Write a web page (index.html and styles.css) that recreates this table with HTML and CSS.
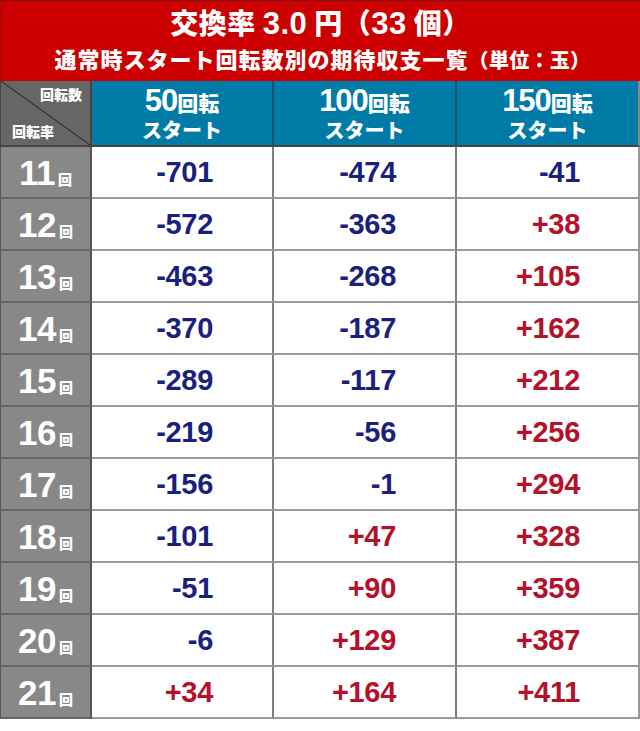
FILE: index.html
```html
<!DOCTYPE html>
<html lang="ja">
<head>
<meta charset="utf-8">
<link rel="stylesheet" href="styles.css">
</head>
<body>
<div class="page">
  <header class="banner">
    <div class="title">交換率 <span class="num">3.0</span> 円（<span class="num">33</span> 個）</div>
    <div class="subtitle">通常時スタート回転数別の期待収支一覧<span class="unit">（単位：玉）</span></div>
  </header>
  <div class="grid">
    <div class="corner"><span class="c-top">回転数</span><span class="c-bottom">回転率</span></div>
    <div class="colhead"><span class="l1"><span class="big">50</span>回転</span><span class="l2">スタート</span></div>
    <div class="colhead"><span class="l1"><span class="big">100</span>回転</span><span class="l2">スタート</span></div>
    <div class="colhead last"><span class="l1"><span class="big">150</span>回転</span><span class="l2">スタート</span></div>

    <div class="rowhead"><span class="big">11</span><span class="kai">回</span></div>
    <div class="val neg">-701</div><div class="val neg">-474</div><div class="val neg last">-41</div>

    <div class="rowhead"><span class="big">12</span><span class="kai">回</span></div>
    <div class="val neg">-572</div><div class="val neg">-363</div><div class="val pos last">+38</div>

    <div class="rowhead"><span class="big">13</span><span class="kai">回</span></div>
    <div class="val neg">-463</div><div class="val neg">-268</div><div class="val pos last">+105</div>

    <div class="rowhead"><span class="big">14</span><span class="kai">回</span></div>
    <div class="val neg">-370</div><div class="val neg">-187</div><div class="val pos last">+162</div>

    <div class="rowhead"><span class="big">15</span><span class="kai">回</span></div>
    <div class="val neg">-289</div><div class="val neg">-117</div><div class="val pos last">+212</div>

    <div class="rowhead"><span class="big">16</span><span class="kai">回</span></div>
    <div class="val neg">-219</div><div class="val neg">-56</div><div class="val pos last">+256</div>

    <div class="rowhead"><span class="big">17</span><span class="kai">回</span></div>
    <div class="val neg">-156</div><div class="val neg">-1</div><div class="val pos last">+294</div>

    <div class="rowhead"><span class="big">18</span><span class="kai">回</span></div>
    <div class="val neg">-101</div><div class="val pos">+47</div><div class="val pos last">+328</div>

    <div class="rowhead"><span class="big">19</span><span class="kai">回</span></div>
    <div class="val neg">-51</div><div class="val pos">+90</div><div class="val pos last">+359</div>

    <div class="rowhead"><span class="big">20</span><span class="kai">回</span></div>
    <div class="val neg">-6</div><div class="val pos">+129</div><div class="val pos last">+387</div>

    <div class="rowhead"><span class="big">21</span><span class="kai">回</span></div>
    <div class="val pos">+34</div><div class="val pos">+164</div><div class="val pos last">+411</div>
  </div>
</div>
</body>
</html>
```

FILE: styles.css
```css
* { box-sizing: border-box; }
html, body { margin: 0; padding: 0; background: #fff; }
body { font-family: "Noto Sans CJK JP", "Liberation Sans", sans-serif; }
.page { width: 640px; }

.banner {
  height: 81px;
  background: #cc0000;
  border-top: 1px solid #7a1414;
  border-left: 1px solid #8a1414;
  color: #fff;
  display: flex;
  flex-direction: column;
  align-items: center;
  padding-top: 2px;
}
.title {
  font-weight: 900;
  font-size: 28px;
  line-height: 38px;
  letter-spacing: 0.5px;
}
.title .num {
  font-family: "Liberation Sans", sans-serif;
  font-weight: 700;
  font-size: 31px;
}
.subtitle {
  font-weight: 900;
  font-size: 22px;
  line-height: 30px;
  letter-spacing: 1px;
  padding-left: 4px;
}
.subtitle .unit { font-size: 20px; letter-spacing: 0.3px; }

.grid {
  display: grid;
  grid-template-columns: 92px 182px 183px 183px;
  grid-template-rows: 66px repeat(11, 52px);
}

.corner {
  background: linear-gradient(to top right, #666 calc(50% - 0.8px), #1e1e1e 50%, #666 calc(50% + 0.8px));
  border-left: 1px solid #444;
  border-right: 2px solid #444;
  border-bottom: 2px solid #444;
  color: #fff;
  font-weight: 900;
  font-size: 14px;
  line-height: 16px;
  display: flex;
  flex-direction: column;
  justify-content: space-between;
  padding: 5px 8px 6px 11px;
}
.c-top { align-self: flex-end; }
.c-bottom { align-self: flex-start; }

.colhead {
  background: #007ba8;
  border-right: 2px solid #1f4f66;
  border-bottom: 2px solid #444;
  color: #fff;
  font-weight: 900;
  display: flex;
  flex-direction: column;
  align-items: center;
  justify-content: center;
  padding-top: 1px;
}
.colhead.last { border-right: 2px solid #888; }
.colhead .l1 { font-size: 21px; line-height: 29px; }
.colhead .big {
  font-family: "Liberation Sans", sans-serif;
  font-weight: 700;
  font-size: 31px;
  letter-spacing: -1px;
}
.colhead .l2 { font-size: 20px; line-height: 25px; }

.rowhead {
  background: #888;
  border-left: 1px solid #555;
  border-right: 2px solid #555;
  border-bottom: 2px solid #666;
  color: #fff;
  display: flex;
  align-items: center;
  justify-content: center;
  gap: 3px;
  padding-top: 2px;
}
.rowhead .big {
  font-family: "Liberation Sans", sans-serif;
  font-weight: 700;
  font-size: 35px;
  letter-spacing: -0.5px;
}
.rowhead .kai {
  font-size: 14px;
  font-weight: 900;
  padding-top: 12px;
}

.val {
  background: #fff;
  border-right: 2px solid #7e7e7e;
  border-bottom: 2px solid #9a9a9a;
  font-family: "Liberation Sans", sans-serif;
  font-weight: 700;
  font-size: 29px;
  letter-spacing: -0.3px;
  display: flex;
  align-items: center;
  justify-content: flex-end;
  padding-right: 59px;
  padding-top: 1px;
}
.val.last { border-right: 2px solid #999; padding-right: 58px; }
.neg { color: #1b1f7e; }
.pos { color: #b3122a; }
```
